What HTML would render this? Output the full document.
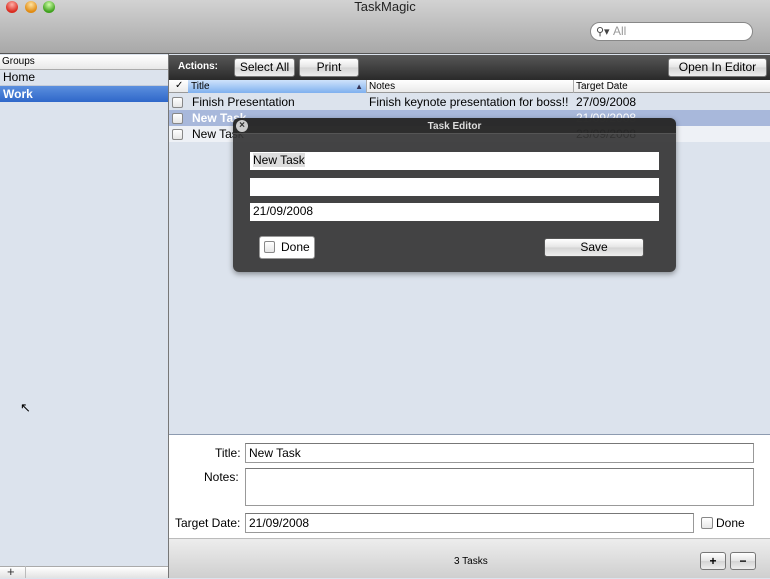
<!DOCTYPE html>
<html><head><meta charset="utf-8"><style>
*{margin:0;padding:0;box-sizing:border-box}
body{width:770px;height:578px;overflow:hidden;font-family:"Liberation Sans",sans-serif;font-size:12px;position:relative;background:#dce3ed}
.a{position:absolute}
.btn{position:absolute;background:linear-gradient(#fff,#e4e4e4 50%,#d4d4d4 51%,#eee);border:1px solid #777;border-radius:3px;text-align:center;font-size:12px;color:#000}
.inp{position:absolute;background:#fff;border:1px solid #999;border-top-color:#777;padding-left:3px;font-size:12px}
.cb{position:absolute;width:11px;height:11px;border:1px solid #888;border-radius:2px;background:linear-gradient(#fff,#e6e6e6)}
</style></head><body>
<div class="a" style="left:0;top:0;width:770px;height:54px;background:linear-gradient(#d2d2d2,#a8a8a8);border-bottom:1px solid #555"></div>
<div class="a" style="left:6px;top:1px;width:12px;height:12px;border-radius:50%;background:radial-gradient(circle at 50% 30%,#ffb0a8,#d92a1e 70%)"></div>
<div class="a" style="left:25px;top:1px;width:12px;height:12px;border-radius:50%;background:radial-gradient(circle at 50% 30%,#ffe3a0,#e08a10 70%)"></div>
<div class="a" style="left:43px;top:1px;width:12px;height:12px;border-radius:50%;background:radial-gradient(circle at 50% 30%,#cfffa8,#3ea01c 70%)"></div>
<div class="a" style="left:0;top:0;width:770px;text-align:center;font-size:13px;color:#222;line-height:14px">TaskMagic</div>
<div class="a" style="left:590px;top:22px;width:163px;height:19px;border-radius:10px;background:#fff;border:1px solid #888;font-size:12px;color:#999;padding-left:22px;line-height:17px">All</div>
<div class="a" style="left:596px;top:25px;font-size:11px;color:#444">&#9906;▾</div>
<!-- sidebar -->
<div class="a" style="left:0;top:55px;width:168px;height:15px;background:linear-gradient(#fff,#e8e8e8);border-bottom:1px solid #aaa;font-size:10px;padding-left:2px;line-height:14px">Groups</div>
<div class="a" style="left:0;top:70px;width:168px;height:16px;font-size:12px;padding-left:3px;line-height:15px;border-bottom:1px solid #c5ccd8">Home</div>
<div class="a" style="left:0;top:86px;width:168px;height:16px;background:linear-gradient(#5b8fde,#2f67c9);color:#fff;font-weight:bold;font-size:12px;padding-left:3px;line-height:16px">Work</div>
<div class="a" style="left:0;top:566px;width:168px;height:12px;background:linear-gradient(#fff,#e2e2e2);border-top:1px solid #aaa"></div>
<div class="a" style="left:7px;top:564px;font-size:13px;color:#333">+</div>
<div class="a" style="left:25px;top:566px;width:1px;height:12px;background:#bbb"></div>
<div class="a" style="left:20px;top:400px;font-size:13px">↖</div>
<div class="a" style="left:168px;top:54px;width:1px;height:524px;background:#777"></div>
<!-- toolbar -->
<div class="a" style="left:169px;top:55px;width:601px;height:25px;background:linear-gradient(#575757,#2a2a2a)"></div>
<div class="a" style="left:178px;top:61px;color:#fff;font-weight:bold;font-size:10px">Actions:</div>
<div class="btn" style="left:234px;top:58px;width:61px;height:19px;line-height:17px">Select All</div>
<div class="btn" style="left:299px;top:58px;width:60px;height:19px;line-height:17px">Print</div>
<div class="btn" style="left:668px;top:58px;width:99px;height:19px;line-height:17px">Open In Editor</div>
<!-- header -->
<div class="a" style="left:169px;top:80px;width:601px;height:13px;background:linear-gradient(#fff,#eaeaea);border-bottom:1px solid #999;font-size:10px;line-height:13px"></div>
<div class="a" style="left:175px;top:80px;font-size:10px">✓</div>
<div class="a" style="left:188px;top:80px;width:178px;height:13px;background:linear-gradient(#cfe3fb,#7fb0ef);font-size:10px;padding-left:3px;line-height:13px">Title<span style="position:absolute;right:3px;font-size:8px;color:#335">▲</span></div>
<div class="a" style="left:366px;top:80px;width:1px;height:13px;background:#aaa"></div>
<div class="a" style="left:369px;top:80px;font-size:10px;line-height:13px">Notes</div>
<div class="a" style="left:573px;top:80px;width:1px;height:13px;background:#aaa"></div>
<div class="a" style="left:576px;top:80px;font-size:10px;line-height:13px">Target Date</div>
<!-- rows -->
<div class="a" style="left:169px;top:94px;width:601px;height:16px;background:#dce3ed;line-height:16px"><span class="a" style="left:23px">Finish Presentation</span><span class="a" style="left:200px">Finish keynote presentation for boss!!</span><span class="a" style="left:407px">27/09/2008</span></div>
<div class="a" style="left:169px;top:110px;width:601px;height:16px;background:#a8b8db;line-height:16px;color:#fff;font-weight:bold"><span class="a" style="left:23px">New Task</span><span class="a" style="left:407px;font-weight:normal">21/09/2008</span></div>
<div class="a" style="left:169px;top:126px;width:601px;height:16px;background:#eef1f6;line-height:16px"><span class="a" style="left:23px">New Task</span><span class="a" style="left:407px">23/09/2008</span></div>
<div class="cb" style="left:172px;top:97px"></div><div class="cb" style="left:172px;top:113px"></div><div class="cb" style="left:172px;top:129px"></div>
<!-- detail -->
<div class="a" style="left:169px;top:434px;width:601px;height:104px;background:#fff;border-top:1px solid #8d9bb0"></div>
<div class="a" style="left:215px;top:446px">Title:</div>
<div class="inp" style="left:245px;top:443px;width:509px;height:20px;line-height:18px">New Task</div>
<div class="a" style="left:204px;top:470px">Notes:</div>
<div class="inp" style="left:245px;top:468px;width:509px;height:38px"></div>
<div class="a" style="left:175px;top:516px">Target Date:</div>
<div class="inp" style="left:245px;top:513px;width:449px;height:20px;line-height:18px">21/09/2008</div>
<div class="cb" style="left:701px;top:517px;width:12px;height:12px"></div>
<div class="a" style="left:716px;top:516px">Done</div>
<div class="a" style="left:169px;top:538px;width:601px;height:40px;background:linear-gradient(#ededed,#cfcfcf);border-top:1px solid #bbb"></div>
<div class="a" style="left:454px;top:556px;font-size:10px">3 Tasks</div>
<div class="btn" style="left:700px;top:552px;width:26px;height:18px;line-height:16px;font-weight:bold">+</div>
<div class="btn" style="left:730px;top:552px;width:26px;height:18px;line-height:16px;font-weight:bold">−</div>
<!-- HUD -->
<div class="a" style="left:233px;top:118px;width:443px;height:154px;background:rgba(55,55,55,0.93);border-radius:6px;box-shadow:0 2px 6px rgba(0,0,0,.4)"></div>
<div class="a" style="left:233px;top:118px;width:443px;height:16px;border-radius:6px 6px 0 0;background:rgba(30,30,30,.6);border-bottom:1px solid #555"></div>
<div class="a" style="left:236px;top:120px;width:12px;height:12px;border-radius:50%;background:#ccc;color:#333;font-size:10px;line-height:12px;text-align:center;font-weight:bold">×</div>
<div class="a" style="left:233px;top:121px;width:443px;text-align:center;color:#ddd;font-size:10px;font-weight:bold">Task Editor</div>
<div class="inp" style="left:250px;top:152px;width:409px;height:18px;line-height:17px;border:none"><span style="background:#ddd">New Task</span></div>
<div class="inp" style="left:250px;top:178px;width:409px;height:18px;border:none"></div>
<div class="inp" style="left:250px;top:203px;width:409px;height:18px;line-height:17px;border:none">21/09/2008</div>
<div class="a" style="left:259px;top:236px;width:56px;height:23px;background:#fff;border-radius:3px;border:1px solid #999"></div>
<div class="cb" style="left:264px;top:241px;width:11px;height:12px"></div>
<div class="a" style="left:281px;top:240px">Done</div>
<div class="btn" style="left:544px;top:238px;width:100px;height:19px;line-height:17px;border-color:#555">Save</div>
</body></html>
